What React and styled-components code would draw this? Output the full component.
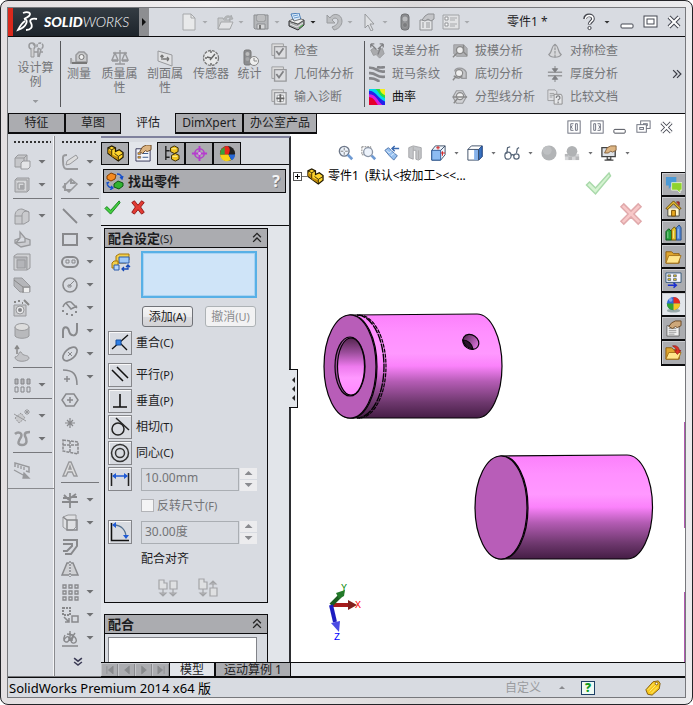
import React from 'react';
import styled, { createGlobalStyle } from 'styled-components';

const c = {
  chrome: '#d8dbe1',
  panel: '#e2e5ea',
  mid: '#abacb0',
  ink: '#1c1c1e',
  muted: '#737477',
  icon: '#98999c',
  line: '#0c0c0e',
};

const GlobalStyle = createGlobalStyle`
  * { box-sizing: border-box; }
  body { margin: 0; background: #fff; }
  body, button, input, textarea {
    font-family: "Noto Sans", "Noto Sans CJK SC", sans-serif;
    font-size: 12px;
    line-height: 14px;
    color: ${c.ink};
  }
  button { border: 0; padding: 0; background: none; cursor: default; }
`;

/* ---------- icons ---------- */

const g = c.icon;
const ICONS = {
  newDoc: <><path d="M3 1h8l4 4v12H3z" fill="#e8e9ea" stroke="#a6a8aa" /><path d="M11 1v4h4" fill="none" stroke="#a6a8aa" /></>,
  open: <><path d="M2 5h5l1 2h6v9H2z" fill="#c9cbcd" stroke="#a6a8aa" /><path d="M2 16l3-7h12l-3 7z" fill="#e2e3e5" stroke="#a6a8aa" /><path d="M8 6c1-4 5-4 7-2V2l2 4-4 1 1-2c-2-1-4 0-4 2" fill="#b4b6b8" stroke="#a0a2a4" strokeWidth=".6" /></>,
  save: <><path d="M2 2h14v14H3l-1-1z" fill="#b4b6b9" stroke="#8d8f92" /><path d="M5 2h8v6H5z" fill="#ededee" stroke="#8d8f92" /><path d="M6 4h6M6 6h6" stroke="#8d8f92" /><path d="M5 11h8v5H5z" fill="#d6d7d9" stroke="#8d8f92" /><path d="M7 12h2v4H7z" fill="#777" /></>,
  print: <><path d="M3 1l8-1 2 7-7 2z" fill="#dcebfa" stroke="#4b7fb9" /><path d="M5 3l5-1M6 5l5-1" stroke="#6b9dd0" /><path d="M1 8l9 3 6-4v5l-6 5-9-4z" fill="#a5a7a9" stroke="#2e2e30" /><path d="M1 8l4-2 1 2 7-2 3 1-6 4z" fill="#eee" stroke="#444" strokeWidth=".7" /><path d="M2 11l7 3 6-4" stroke="#e8e8e8" fill="none" /><path d="M11 15l4-3" stroke="#3fb23f" /></>,
  undo: <path d="M2 2v8h8L7 7c2-3 6-2 6 1s-3 5-6 6l2 3c5-1 8-5 8-9 0-7-9-9-12-3z" fill="#bdbfc2" stroke="#999b9e" />,
  cursor: <path d="M5 1v14l3-3 3 6 2-1-3-6h4z" fill="#dfe1e4" stroke="#97999c" />,
  traffic: <><rect x="5" y="1" width="8" height="16" rx="3" fill="#8b8c8f" stroke="#717274" /><circle cx="9" cy="6" r="2.5" fill="#b9babc" /><circle cx="9" cy="12" r="2.5" fill="#7b7c7f" stroke="#aaa" strokeWidth=".5" /></>,
  props: <><path d="M2 7h12v10H2z" fill="#e4e5e7" stroke="#8e9093" /><path d="M4 10h2M8 10h4M4 12h2M8 12h4M4 14h2M8 14h4" stroke="#97999c" /><path d="M4 7l3-4 3-2h6v5l-3 2-3-2-3 2z" fill="#c4c5c8" stroke="#8e9093" /></>,
  options: <><path d="M1 2h16v14H1z" fill="#e1e2e4" stroke="#a0a2a5" /><path d="M3 4h3v3H3zM3 10h3v3H3z" fill="#fff" stroke="#919396" /><path d="M8 5h7M8 7h5M8 11h7M8 13h5" stroke="#a7a9ac" /></>,
  help: <><path d="M5 6c0-5 8-5 8 0 0 2-3.500 3-3.500 5.500" fill="none" stroke="#43454d" strokeWidth="3.600" /><path d="M5.500 6c0-4.500 7.500-4.500 7.500 0 0 2-3.500 3-3.500 5" fill="none" stroke="#fff" strokeWidth="1.600" /><circle cx="9.500" cy="15" r="1.600" fill="#fff" stroke="#43454d" /></>,
  winMin: <rect x="2" y="11" width="12" height="4" rx="1" fill="#fff" stroke="#454852" />,
  winMax: <><rect x="2" y="3" width="13" height="11" fill="#fff" stroke="#454852" /><rect x="5" y="6" width="7" height="5" fill="#fff" stroke="#454852" /></>,
  winClose: <><path d="M4 4l10 10M14 4L4 14" stroke="#454852" strokeWidth="4" /><path d="M4 4l10 10M14 4L4 14" stroke="#fff" strokeWidth="2" /></>,
  winRestore: <><rect x="6" y="2" width="10" height="8" fill="#fff" stroke="#6c707d" /><rect x="9" y="5" width="4" height="2" fill="none" stroke="#6c707d" /><rect x="2" y="6" width="10" height="8" fill="#fff" stroke="#6c707d" /><rect x="5" y="9" width="4" height="2" fill="none" stroke="#6c707d" /></>,
  paneL: <><rect x="2" y="2" width="13" height="13" fill="#fff" stroke="#6c707d" /><path d="M8 5H5v7h3M7 7L5 8.500l2 1.500M10 5h2v7h-2z" fill="none" stroke="#6c707d" /></>,
  paneR: <><rect x="2" y="2" width="13" height="13" fill="#fff" stroke="#6c707d" /><path d="M9 5h3v7H9M10 7l2 1.500-2 1.500M5 5h2v7H5z" fill="none" stroke="#6c707d" /></>,
  study: <><circle cx="5" cy="5" r="3" fill="none" stroke={g} strokeWidth="1.500" /><path d="M4 7v9h3V7" fill="#d0d0d2" stroke={g} /><circle cx="13" cy="5" r="3" fill="none" stroke={g} strokeWidth="1.500" strokeDasharray="3 1" /><path d="M11 8v8M14 8l-2 8M7 11h4M13 11h3M6 3l2 2" stroke={g} strokeWidth="1.500" /></>,
  measure: <><path d="M6 13V6l3-3h5l3 3v7zM1 9v5h6" fill="#c9cacc" stroke={g} strokeWidth="1.500" /><circle cx="11.500" cy="8" r="2.500" fill="#eee" stroke="#777" /><path d="M2 14h15" stroke="#777" strokeWidth="2" /></>,
  mass: <path d="M9 1v14M2 4h14M4 15h10M4 4l-3 7h6zM14 4l-3 7h6zM1 12h6M11 12h6" fill="none" stroke={g} strokeWidth="1.400" />,
  section: <><path d="M2 2l14 4v11L2 12z" fill="#e0e1e3" stroke={g} /><path d="M6 6v5M6 6L4.500 8M6 6l1.500 2M7 10h6M13 10l-2-2M13 10l-2 2" fill="none" stroke="#777" strokeWidth="1.300" /></>,
  sensor: <><circle cx="9" cy="9" r="7.500" fill="#e7e8e9" stroke="#777" strokeWidth="1.300" strokeDasharray="3 1" /><path d="M8 11l5-6M9 9L5 8M9 2v2M3 9h2M13 9h2M9 14v2" stroke="#666" strokeWidth="1.400" /></>,
  stats: <><rect x="3" y="1" width="7" height="15" rx="2" fill="#8c8d90" stroke="#777" /><circle cx="6.500" cy="5" r="2" fill="#bbb" /><circle cx="6.500" cy="10" r="2" fill="#a5a6a8" /><circle cx="13" cy="12" r="4.500" fill="#eee" stroke="#888" /><path d="M13 9v3h3" fill="none" stroke="#888" /></>,
  check: <><path d="M1 1h13v13H1z" fill="#ddd" stroke={g} /><path d="M4 4h13v13H4z" fill="#dcdde0" stroke={g} strokeWidth="1.500" /><path d="M6 9l3 4 5-7" fill="none" stroke="#808184" strokeWidth="2" /></>,
  import: <><path d="M1 1h13v13H1z" fill="#ddd" stroke={g} /><path d="M4 4h13v13H4z" fill="#e8e9eb" stroke={g} strokeWidth="1.500" /><path d="M7 7h7v7H7z" fill="#fff" stroke={g} /><path d="M10.500 6v9M6 10.500h9" stroke="#666" strokeWidth="2" /></>,
  deviation: <><path d="M2 8l4-3 4 4 5-3 2 6-5 5-4-4-3 1z" fill="#a9aaad" stroke={g} /><path d="M2 1l6 6M16 1l-6 6M2 1v4M2 1h4M16 1h-4M16 1v4M13 5l-3 8" fill="none" stroke="#808184" strokeWidth="1.500" /></>,
  zebra: <path d="M0 2c9-1 8 6 18 4M0 8c9-1 8 6 18 4M0 14c8-1 8 3 12 3M9 1c3 1 5 1 9 0" fill="none" stroke="#85868a" strokeWidth="3" />,
  curvature: <><path d="M0 0h18v18H0z" fill="#f3ee1c" /><path d="M0 0h12c1 4 3 6 6 7v11H0z" fill="#28dd3c" /><path d="M0 0h7c4 2 4 8 11 10v8H0z" fill="#00d5ee" /><path d="M0 2c8 0 9 8 18 12v4H0z" fill="#2222ea" /><path d="M0 6c8 0 9 7 15 12H0z" fill="#d81ce0" /><path d="M0 9c6 1 7 5 10 9H0z" fill="#e5002c" /></>,
  draft: <><path d="M2 2h11l4 4v9H5l-3-3z" fill="#b0b1b4" stroke={g} /><circle cx="9" cy="8" r="4" fill="#eee" stroke="#888" strokeWidth="1.500" /><path d="M6 11l-5 5M13 2v8l4 4" fill="none" stroke="#888" strokeWidth="1.500" /></>,
  undercut: <><path d="M3 6c1-5 10-5 13 1v7h-5v-4" fill="#c4c5c8" stroke={g} strokeWidth="1.500" /><circle cx="8" cy="8" r="4" fill="#eee" stroke="#888" strokeWidth="1.300" /><path d="M5 11l-4 5M2 11c4 4 8 3 9 0" fill="none" stroke="#888" strokeWidth="1.500" /></>,
  parting: <><path d="M5 2h7l4 7-4 7H5L1 9z" fill="#d1d2d5" stroke={g} strokeWidth="1.300" /><circle cx="9" cy="8" r="4" fill="#eee" stroke="#888" strokeWidth="1.300" /><path d="M6 11l-4 5M1 9h16" fill="none" stroke="#888" strokeWidth="1.500" /></>,
  symmetry: <><path d="M9 2c4 0 3 9 7 11-2 4-12 4-14 0 4-2 3-11 7-11z" fill="#d6d7da" stroke={g} strokeWidth="1.300" /><path d="M9 1v16" stroke="#808184" strokeDasharray="3 1" /></>,
  thickness: <><path d="M1 7h16M1 11h16" stroke={g} strokeWidth="1.500" /><path d="M9 0v5M6 3l3 4 3-4zM9 18v-4M6 15l3-4 3 4z" fill="#808184" stroke="#808184" /></>,
  compare: <><path d="M1 1h8l2 2v10H1z" fill="#dedfe2" stroke={g} /><path d="M3 5h5M3 7h5M3 9h3" stroke={g} /><path d="M8 6h8l1 2v9H8z" fill="#e6e7e9" stroke="#888" /><path d="M10.500 10c0-3 4-3 4 0 0 2-2 1-2 3M12.500 14v2" fill="none" stroke="#808184" strokeWidth="1.400" /></>,
  boss: <><path d="M2 5l3-3h9v9l-3 3H2z" fill="#c6c7ca" stroke={g} /><path d="M2 5h9v9M11 5l3-3" fill="none" stroke={g} /><path d="M8 10l2-2h7v6l-2 2H8z" fill="#e4e5e7" stroke={g} /></>,
  cut: <><path d="M2 4l2-2h12v12l-2 2H2z" fill="#c6c7ca" stroke={g} /><path d="M2 4h12v12M5 7h6v6H5z" fill="#d7d8da" stroke={g} /><path d="M7 9h4v4H7z" fill="#a5a6a9" /></>,
  fillet: <><path d="M2 9c0-5 3-7 7-7l7 3v9l-5 3H2z" fill="#c9cacd" stroke={g} /><path d="M2 9h7c0-4 3-6 7-4M9 9v8" fill="none" stroke={g} /></>,
  rib: <path d="M2 10l5-2V2l5 6 5 2v5l-9 2-6-4zM7 8l-4 5 9-1V8" fill="#cbccd0" stroke={g} strokeWidth="1.300" />,
  shell: <><path d="M1 3l3-2h13v14l-3 2H1z" fill="#cfd0d3" stroke={g} /><path d="M1 4h13v13M4 7h8v8H4z" fill="#b4b5b9" stroke={g} /></>,
  draftCut: <><path d="M1 2h8l8 8v6H7L1 10z" fill="#b5b6ba" stroke={g} /><path d="M1 4l9 7v6M10 11h7" fill="none" stroke="#888" /><path d="M11 12h5v4h-5z" fill="#eee" /></>,
  hole: <><path d="M1 6h12v11H1z" fill="#c9cacd" stroke={g} /><circle cx="7" cy="11" r="4" fill="#e7e7e9" stroke={g} /><circle cx="7" cy="11" r="2" fill="#85868a" /><path d="M11 1l5 5M1 3h2M5 2h2M9 4h1" stroke="#888" strokeWidth="2" /></>,
  revolve: <><path d="M2 5v9c2 3 12 3 14 0V5" fill="#b8b9bc" stroke={g} /><ellipse cx="9" cy="5" rx="7" ry="3.500" fill="#ddd" stroke={g} /></>,
  dome: <><path d="M2 12c5-1 3-6 6-5 2 5 7 2 8 6 0 4-14 5-14-1z" fill="#c3c4c8" stroke={g} /><path d="M4 9V2M2 4l2-3 2 3" fill="none" stroke="#888" strokeWidth="1.500" /></>,
  pattern: <><path d="M2 3h3v5H2zM8 3h3v5H8zM14 3h3v5h-3z" fill="#b1b2b6" stroke="#85868a" /><path d="M2 11h3v5H2zM8 11h3v5H8zM14 11h3v5h-3z" fill="none" stroke="#85868a" /></>,
  refGeo: <><path d="M2 11l6-5 4 5-6 5z" fill="#c8c9cc" stroke={g} strokeDasharray="2 1" /><path d="M1 7l12 7M14 2v6M11 5h6M12 3l4 4M16 3l-4 4" stroke={g} /></>,
  curves: <path d="M2 4c3-3 8-1 6 3-2 3-5 8 1 8s5-6 3-9c-1-4 3-4 5-4" fill="none" stroke={g} strokeWidth="2.500" />,
  instant: <><path d="M2 6V2l14 4v5l-3-1" fill="none" stroke={g} strokeWidth="1.500" /><path d="M5 4v3M8 5v3M11 6v3M1 9l11 6M11 12l5 5h-6z" stroke={g} fill={g} strokeWidth="1.300" /></>,
  sketch: <><path d="M6 2c-5 0-4 2-4 6 0 6 1 8 4 8h11" fill="none" stroke={g} strokeWidth="2" /><path d="M5 12l1-4 9-6 2 3-8 6z" fill="#ddd" stroke={g} /></>,
  smartDim: <><path d="M2 11l8-8 6 5-8 8z" fill="none" stroke={g} strokeWidth="1.500" /><path d="M4 7v7h6M10 3v4h4" fill="none" stroke={g} strokeWidth="2" /></>,
  sLine: <path d="M2 2l14 14" stroke="#88898c" strokeWidth="1.800" />,
  sRect: <path d="M2 4h14v11H2z" fill="none" stroke="#88898c" strokeWidth="2" />,
  slot: <><rect x="1" y="4" width="16" height="10" rx="5" fill="none" stroke="#88898c" strokeWidth="2" /><path d="M5 7h3v3H5zM11 7h3v3h-3z" fill="none" stroke="#88898c" /></>,
  sCircle: <><circle cx="9" cy="9" r="7" fill="none" stroke="#88898c" strokeWidth="1.600" /><path d="M8 10l5-5M7 9h3v2H7z" fill="none" stroke="#88898c" /></>,
  arc: <><path d="M2 8c2-6 8-6 9-4l5 5M5 4l5 6 6-3" fill="none" stroke="#88898c" strokeWidth="1.500" /><path d="M2 11v2M5 15h2M10 16h2M15 12v2" stroke="#88898c" strokeWidth="2" /></>,
  spline: <path d="M2 16V9c0-5 5-5 6 0s8 7 8-1V1" fill="none" stroke="#88898c" strokeWidth="2" />,
  ellipse: <><ellipse cx="9" cy="9" rx="8.500" ry="5" transform="rotate(-42 9 9)" fill="none" stroke="#88898c" strokeWidth="1.700" /><path d="M7 7l4 4M11 7l-4 4" stroke="#88898c" /></>,
  sFillet: <path d="M2 2c10 0 14 4 14 15M6 8v6M3 11h6" fill="none" stroke="#88898c" strokeWidth="1.500" />,
  polygon: <path d="M5 3h8l4 6-4 6H5L1 9zM9 6v6M6 9h6" fill="none" stroke="#88898c" strokeWidth="1.500" />,
  point: <path d="M9 4v10M4 9h10M6 6l6 6M12 6l-6 6" stroke="#88898c" strokeWidth="1.200" />,
  plane: <path d="M2 3l15 2v12L2 14zM2 8h15M9 4v12" fill="none" stroke="#88898c" strokeWidth="1.500" strokeDasharray="3 1" />,
  letter: <path d="M2 16L8 2h2l6 14h-3l-2-4H7l-2 4zM8 9h2L9 6z" fill="#ddd" stroke={g} strokeWidth="1.400" />,
  trim: <path d="M9 2v15M1 11h16M3 4l5 5M15 3L8 8M2 7h6M11 6h5" fill="none" stroke="#88898c" strokeWidth="1.800" />,
  convert: <><path d="M2 3l5-2h8v12l-3 3H6l-4-3z" fill="#dfe0e3" stroke={g} /><path d="M2 3l4 3h10v10H6V6" fill="none" stroke="#88898c" strokeWidth="1.500" /></>,
  offset: <path d="M2 3h14v6l-6 8H4M2 7h9v2l-5 5H2" fill="none" stroke="#88898c" strokeWidth="2" />,
  mirror: <><path d="M8 3H6L1 15h7M10 3h2l5 12h-7" fill="#cfd0d3" stroke="#88898c" strokeWidth="1.500" /><path d="M9 1v16" stroke="#88898c" strokeDasharray="2 1" strokeWidth="1.500" /></>,
  grid: <path d="M2 2h3v3H2zM8 2h3v3H8zM14 2h3v3h-3zM2 8h3v3H2zM8 8h3v3H8zM14 8h3v3h-3zM2 14h3v3H2zM8 14h3v3H8zM14 14h3v3h-3z" fill="none" stroke="#88898c" strokeWidth="1.300" />,
  move: <><path d="M2 2h7v7H2z" fill="none" stroke="#88898c" strokeWidth="2" strokeDasharray="2 1" /><path d="M11 10h6v6h-6zM3 11l5 5M8 12v4H4" fill="none" stroke="#88898c" strokeWidth="1.500" /></>,
  relations: <path d="M1 17h16M9 2v10M4 6c-4 8 4 9 4 4S3 9 3 12M14 4l-4 6c-1 6 7 5 5 0s-4-1-4 2M6 5l6 1" fill="none" stroke="#88898c" strokeWidth="1.400" />,
  part: <><path d="M1 3l4-2 4 2v4l4-2 4 3v5l-5 4L1 9z" fill="#ffd52e" stroke="#241b03" strokeWidth="1.300" /><path d="M1 5l4 2v4L1 8zM5 10l7 3v3l-7-4z" fill="#c18a0a" /><path d="M1 3l4 2 4-2M5 5v6M8 9l4 3 5-3M12 12v4" fill="none" stroke="#241b03" strokeWidth=".9" /></>,
  propTab: <><path d="M1 4h15v13H1z" fill="#f3f5fa" stroke="#335" /><path d="M3 8h3v2H3zM3 12h3v2H3z" fill="#e8a325" stroke="#335" strokeWidth=".5" /><path d="M8 9h6M8 13h6" stroke="#358" /><path d="M5 7l3-5 4-2h5v5l-4 2-2-1-3 3z" fill="#dcb482" stroke="#6b4824" /></>,
  config: <><path d="M3 1v15M3 6h4M3 13h4" stroke="#222" fill="none" strokeWidth="1.500" /><path d="M8 3l4-2 4 2v4l-4 2-4-2zM9 11l4-2 4 2v4l-4 2-4-2z" fill="#f0c322" stroke="#352703" /><path d="M9 4h5M10 12h5" stroke="#fff4a5" /></>,
  target: <><circle cx="9" cy="9" r="5" fill="none" stroke="#b53dcd" strokeWidth="1.600" /><path d="M9 1v16M1 9h16" stroke="#b53dcd" strokeWidth="2" /><circle cx="9" cy="9" r="1.500" fill="#e9a2f5" /></>,
  ballDark: <><circle cx="9" cy="9" r="8" fill="#222" /><path d="M9 1c3 2 3 5 1 9H1c0-5 3-9 8-9z" fill="#e6271b" /><path d="M1 10h9l3 6c-6 3-11 0-12-6z" fill="#f7d116" /><path d="M2 5l4-3v8H1z" fill="#37a339" /><path d="M10 10h7c0 3-2 6-4 6z" fill="#2566d6" /></>,
  ball: <><ellipse cx="9" cy="15.500" rx="7" ry="2" fill="#9aa" /><circle cx="9" cy="8" r="7" fill="#2d68da" /><path d="M9 8V1c4 0 7 3 7 7z" fill="#e32b21" /><path d="M9 8v7c-4 0-7-3-7-7z" fill="#35a42f" /><path d="M9 8h7c0 4-3 7-7 7z" fill="#f4c823" /><circle cx="6" cy="4" r="2" fill="#fff" opacity=".4" /></>,
  find: <><path d="M1 4l4-3 5 2-1 4-4 2-4-2z" fill="#f58a1f" stroke="#833d00" /><path d="M8 12l4-3 5 2v3l-4 3-5-2z" fill="#30b330" stroke="#0b5710" /><path d="M11 2c4 0 5 2 5 5M14 5l2 2 1-3M1 10c0 4 2 6 6 6M5 14l2 2-3 2M1 12l2-2" fill="none" stroke="#164fc9" strokeWidth="1.300" /></>,
  ok: <path d="M1 10l2-2 4 4L16 2l1 2L7 16z" fill="#45cf3f" stroke="#14821c" />,
  cancel: <path d="M2 4l3-2 4 5 4-5 3 2-4 5 4 6-3 2-4-5-4 5-3-2 4-6z" fill="#e23b33" stroke="#8d1110" />,
  okLight: <path d="M1 10l2-2 4 4L16 2l1 2L7 16z" fill="#d5f3d1" stroke="#a9d9aa" />,
  cancelLight: <path d="M2 4l2-2 5 5 5-5 2 2-5 5 5 5-2 2-5-5-5 5-2-2 5-5z" fill="#f7c8c8" stroke="#e0a9ab" />,
  selSet: <><path d="M5 3l3-2h10v6l-3 3H5z" fill="#f2d04c" stroke="#a77708" /><path d="M8 4h10v6H8z" fill="#9fc8f7" stroke="#2c5daa" /><path d="M1 10l2-2h4v7H1z" fill="#f2d04c" stroke="#a77708" /><path d="M3 12h5v5H3z" fill="#b6d5fa" stroke="#2c5daa" /><path d="M17 12v4h-6M15 14l2-2 2 2M13 14l-2 2 2 2" fill="none" stroke="#1649b8" strokeWidth="1.300" /></>,
  coincident: <><path d="M2 16L18 2M9 9l8 8" stroke="#111" strokeWidth="1.300" /><path d="M6 7h5v5H6z" fill="#2d7ee6" stroke="#144f9f" /></>,
  parallel: <path d="M2 5l11 11M7 2l11 11" stroke="#111" strokeWidth="1.500" />,
  perpendicular: <path d="M10 3v13M3 16h14" stroke="#111" strokeWidth="1.600" />,
  tangent: <><circle cx="8" cy="12" r="6" fill="none" stroke="#222" strokeWidth="1.500" /><path d="M6 1l13 12" stroke="#222" strokeWidth="1.500" /></>,
  concentric: <><circle cx="10" cy="10" r="8.500" fill="none" stroke="#333" strokeWidth="1.500" /><circle cx="10" cy="10" r="4.500" fill="none" stroke="#333" strokeWidth="1.500" /></>,
  distance: <><path d="M1.500 4v13M18.500 4v13" stroke="#222" strokeWidth="1.500" /><path d="M3 7h14" stroke="#205bd5" strokeWidth="1.500" /><path d="M2 7l4-3v6zM18 7l-4-3v6z" fill="#205bd5" /></>,
  angle: <><path d="M1.500 1v17.500H19" fill="none" stroke="#111" strokeWidth="1.500" /><path d="M4 3c7 0 12 5 12 12" fill="none" stroke="#54718f" strokeWidth="1.300" /><path d="M2 3l4-3v6zM16 17l-3-4h6z" fill="#205bd5" /></>,
  aligned: <path d="M1 2h5v3h3v6H1zM12 3h7v8h-7zM5 11v6M2 15l3 3 3-3zM15 11v6M12 15l3 3 3-3z" fill="#dfe0e2" stroke="#a3a4a7" strokeWidth="1.200" />,
  antiAligned: <path d="M1 1h5v3h3v7H1zM12 10h7v8h-7zM5 11v6M2 15l3 3 3-3zM15 10V4M12 6l3-3 3 3z" fill="#dfe0e2" stroke="#a3a4a7" strokeWidth="1.200" />,
  zoomFit: <><circle cx="7" cy="7" r="5.500" fill="#edf3fb" stroke="#6d7788" strokeWidth="1.500" /><path d="M7 3v8M3 7h8" stroke="#777" strokeDasharray="3 2" /><path d="M11 11l5 5" stroke="#6f9ad2" strokeWidth="3" /></>,
  zoomArea: <><path d="M1 2h10v9H1z" fill="none" stroke="#777" strokeDasharray="2 1" /><circle cx="8" cy="8" r="5" fill="#edf3fb" stroke="#8b95a5" strokeWidth="1.500" /><path d="M12 12l4 4" stroke="#6f9ad2" strokeWidth="3" /></>,
  prevView: <><path d="M1 6l4-3 5 5 5 4-4 5-5-5z" fill="#98c1ef" stroke="#476ea5" /><path d="M3 6l3 3 3-3M8 12l4-3" fill="none" stroke="#e6f2ff" /><path d="M10 4h7M12 1L9 4l3 3" fill="none" stroke="#3a69af" strokeWidth="1.600" /></>,
  sectionView: <><path d="M2 3l5-2 9 2v12l-3 2-3-1V6H7v10l-5-2z" fill="#c3c5c8" stroke="#a1a3a6" /><path d="M7 6V2M13 6v10" stroke="#aaa" /></>,
  viewOrient: <><path d="M2 6l4-5h11v10l-5 6H2z" fill="#f0f6fd" stroke="#33455f" /><path d="M2 6h10v11H2z" fill="#8dbcf2" stroke="#245596" /><path d="M12 6l5-5" stroke="#33455f" /><path d="M9 1v4M7 3h4M14 7v5M12 9h5" stroke="#d52c2c" strokeWidth="1.200" /></>,
  display: <><path d="M1 5l4-4h12v12l-4 4H1z" fill="#fff" stroke="#33455f" /><path d="M13 5l4-4v12l-4 4z" fill="#3772c2" stroke="#1f4484" /><path d="M8 5h5v12H8z" fill="#86b2ea" /><path d="M1 5h12v12" fill="none" stroke="#33455f" /></>,
  glasses: <path d="M3 10l1-7 3-1M14 9l1-5 2-1M8 12c1-2 2-1 3 0M1 12a3.500 4 0 1 0 7 0a3.500 4 0 1 0-7 0M11 13a3 3 0 1 0 6 0a3 3 0 1 0-6 0" fill="none" stroke="#566578" strokeWidth="1.400" />,
  sphere: <><circle cx="9" cy="9" r="8.500" fill="#b2b4b6" /><circle cx="7" cy="6" r="5" fill="#bec0c2" /></>,
  scene: <><path d="M1 10h16v7H1z" fill="#d5d6d8" /><path d="M1 10h4v3H1zM9 10h4v3H9zM5 13h4v4H5zM13 13h4v4h-4z" fill="#b7b8ba" /><circle cx="9" cy="7" r="6" fill="#b0b2b4" /></>,
  viewSettings: <><path d="M1 3h15v10H1z" fill="#dfe3e8" stroke="#444" strokeWidth="1.500" /><path d="M7 13v3h4v-3M4 17h10" stroke="#444" fill="none" strokeWidth="1.300" /><path d="M4 9l3-6 4-2h6v5l-4 2-2-1-3 2z" fill="#dcb482" stroke="#805d38" /></>,
  chat: <><path d="M1 1h11v9H7l-3 4v-4H1z" fill="#4b9ad6" /><path d="M7 7h11v8h-2v3l-3-3H7z" fill="#8fd32d" stroke="#fff" strokeWidth=".7" /></>,
  home: <><path d="M3 9v8h12V9" fill="#fff6cc" stroke="#444" /><path d="M1 9l8-8 8 8-2 1-6-6-6 6z" fill="#e7bd34" stroke="#674600" /><path d="M12 2h3v4" fill="#c32" stroke="#722" /><path d="M7 11h4v6H7z" fill="#e8a820" stroke="#744b00" /></>,
  library: <><path d="M1 8l3-3 3 3v9H1z" fill="#25a23b" stroke="#0b521a" /><path d="M7 6l3-3 2 3v11H7z" fill="#e6c329" stroke="#675400" /><path d="M12 4l3-3 2 3v13h-5z" fill="#578ede" stroke="#264a82" /><path d="M3 8v7M9 7v8M14 5v10" stroke="#fff" opacity=".5" /></>,
  folder: <><path d="M1 4h6l2 2h6v10H1z" fill="#e0a62e" stroke="#8b5b0c" /><path d="M1 16l3-8h13l-3 8z" fill="#ffe58b" stroke="#a6741b" /></>,
  palette: <><path d="M1 1h16v10H1z" fill="#f6f6ff" stroke="#357" /><path d="M3 3h3v2H3zM9 3h3v2H9zM3 7h3v2H3zM9 7h3v2H9z" fill="#edbf21" stroke="#246" strokeWidth=".6" /><path d="M3 14h8M9 11.500l3 2.500-3 2.500" fill="none" stroke="#1b2fd0" strokeWidth="1.500" /></>,
  custom: <><path d="M2 6h13v11H2z" fill="#f0f0f0" stroke="#666" /><path d="M4 9h8M4 11h8M4 13h8M4 15h6" stroke="#999" /><path d="M4 7l3-4 4-2h6v5l-4 2-2-1-3 2z" fill="#cda77a" stroke="#6b4824" /></>,
  folderOut: <><path d="M1 4h6l2 2h6v10H1z" fill="#e0a62e" stroke="#8b5b0c" /><path d="M1 16l3-7h13l-3 7z" fill="#ffe58b" stroke="#a6741b" /><path d="M8 2c5-1 7 2 7 5h2l-4 4-3-4h2c0-2-1-3-4-5z" fill="#de3127" stroke="#8b1712" strokeWidth=".7" /></>,
  tag: <><path d="M1 11l8-9 6-1 2 3-1 6-8 7-5-1z" fill="#f8c91d" stroke="#7c5306" /><path d="M3 11l7-7M5 13l7-7M7 15l7-7" stroke="#ffed85" /><circle cx="13" cy="4" r="1.500" fill="#fff" stroke="#7c5306" /></>,
  up: <path d="M4 8l5-5 5 5M4 14l5-5 5 5" fill="none" stroke="#222" strokeWidth="1.700" />,
  down: <path d="M4 4l5 4 5-4M4 9l5 4 5-4" fill="none" stroke="#3b3b55" strokeWidth="2" />,
  more: <path d="M4 4l5 5-5 5M9 4l5 5-5 5" fill="none" stroke="#3b3d46" strokeWidth="1.600" />,
  first: <path d="M5 4v10M13 4L7 9l6 5z" fill="#888a8d" stroke="#888a8d" />,
  prev: <path d="M12 4L6 9l6 5z" fill="#888a8d" stroke="#888a8d" />,
  next: <path d="M6 4l6 5-6 5z" fill="#888a8d" stroke="#888a8d" />,
  last: <path d="M5 4l6 5-6 5zM13 4v10" fill="#888a8d" stroke="#888a8d" />,
};
const LARGE_ICONS = ['selSet', 'coincident', 'parallel', 'perpendicular', 'tangent', 'concentric', 'distance', 'angle', 'aligned', 'antiAligned'];

const Svg = styled.svg`
  display: block;
  flex: none;
  width: ${p => p.$size}px;
  height: ${p => p.$size}px;
`;
const Icon = ({ name, size = 18 }) => {
  const box = LARGE_ICONS.includes(name) ? 20 : 18;
  return <Svg $size={size} viewBox={`0 0 ${box} ${box}`} aria-hidden="true">{ICONS[name]}</Svg>;
};

const Caret = styled.span`
  display: block;
  flex: none;
  width: 8px;
  height: 4px;
  background: ${p => p.$color || '#6f7073'};
  clip-path: ${p => (p.$up ? 'polygon(0 100%, 100% 100%, 50% 0)' : 'polygon(0 0, 100% 0, 50% 100%)')};
`;

/* ---------- window and title bar ---------- */

const Window = styled.div`
  min-height: 100vh;
  display: flex;
  padding: 7px;
  border: 1px solid #242428;
  border-radius: 8px;
  background: linear-gradient(90deg, #e3dfe1, #f1eff0 30%, #dcdadb 60%, #ececee);
`;
const Frame = styled.div`
  flex: 1;
  min-width: 0;
  display: flex;
  flex-direction: column;
  background: ${c.chrome};
  box-shadow: 0 0 0 1px #77787c;
`;
const TitleBar = styled.header`
  display: flex;
  align-items: center;
  height: 29px;
  padding-right: 2px;
  border-bottom: 1px solid ${c.line};
`;
const Brand = styled.div`
  display: flex;
  align-items: center;
  align-self: stretch;
  width: 131px;
  padding-left: 3px;
  gap: 6px;
  border-left: 5px solid #da291c;
  background: linear-gradient(#343c43, #1d242b);
  color: #fff;
  font: italic 300 14px/18px Lato, sans-serif;
  b { font-weight: 900; }
`;
const BrandMark = styled.svg`
  width: 22px;
  height: 22px;
`;
const BrandToggle = styled.button`
  align-self: stretch;
  width: 10px;
  background: #8d8e91;
  display: grid;
  place-items: center;
  &::after {
    content: '';
    border: 4px solid transparent;
    border-left-color: #111;
    border-right: 0;
  }
`;
const QuickTools = styled.div`
  display: flex;
  align-items: center;
  flex: 1;
  padding-left: 31px;
`;
const QuickButton = styled.button`
  display: flex;
  align-items: center;
  gap: 4px;
  width: ${p => p.$w}px;
  ${Caret} { width: 6px; height: 3px; }
`;
const DocTitle = styled.h1`
  margin: 0;
  width: 73px;
  font-size: 12px;
  font-weight: 400;
`;
const WindowButtons = styled.div`
  display: flex;
  align-items: center;
  gap: 5px;
`;
const PlainButton = styled.button`
  display: flex;
  align-items: center;
  gap: 6px;
`;
const HelpMenu = styled(PlainButton)`
  margin-right: 4px;
  ${Caret} { width: 6px; height: 3px; }
`;

const QUICK = [
  ['newDoc', '新建', 36, 1], ['open', '打开', 36, 1], ['save', '保存', 36, 1], ['print', '打印', 37, 2],
  ['undo', '撤消', 35, 1], ['cursor', '选择', 36, 1], ['traffic', '重建模型', 22], ['props', '文件属性', 24], ['options', '选项', 36, 1],
];

/* ---------- ribbon ---------- */

const Ribbon = styled.div`
  display: flex;
  height: 77px;
  padding: 4px 1px 6px 3px;
  border-bottom: 1px solid ${c.line};
`;
const Rule = styled.span`
  width: 1px;
  background: #56575a;
`;
const BigButton = styled.button`
  display: flex;
  flex-direction: column;
  align-items: center;
  width: ${p => p.$w}px;
  padding: ${p => (p.$tall ? 0 : 8)}px 3px 0;
  color: ${c.muted};
  gap: ${p => (p.$tall ? 2 : 0)}px;
  ${Caret} { width: 6px; height: 3px; margin-top: 9px; }
`;
const Commands = styled.div`
  display: grid;
  grid-template-rows: repeat(3, 23px);
  width: ${p => p.$w}px;
  padding-left: ${p => p.$pad}px;
  margin-top: -2px;
`;
const Command = styled.button`
  display: flex;
  align-items: center;
  gap: 7px;
  white-space: nowrap;
  color: ${p => (p.$active ? '#111' : c.muted)};
`;
const MoreButton = styled.button`
  margin-left: auto;
  align-self: center;
`;

const BIG = [['measure', '测量', 36], ['mass', '质量属性', 45], ['section', '剖面属性', 46], ['sensor', '传感器', 46], ['stats', '统计', 31]];
const COMMANDS = [
  [99, 6, [['check', '检查'], ['check', '几何体分析'], ['import', '输入诊断']]],
  [83, 4, [['deviation', '误差分析'], ['zebra', '斑马条纹'], ['curvature', '曲率']]],
  [95, 4, [['draft', '拔模分析'], ['undercut', '底切分析'], ['parting', '分型线分析']]],
  [90, 4, [['symmetry', '对称检查'], ['thickness', '厚度分析'], ['compare', '比较文档']]],
];

const TabRow = styled.div`
  display: flex;
  height: 22px;
  background: linear-gradient(${c.chrome}, ${c.chrome}) left / 282px 100% no-repeat, #fff;
`;
const RibbonTab = styled.button`
  width: ${p => p.$w}px;
  height: 20px;
  margin-top: ${p => (p.$on ? -1 : 0)}px;
  border: 1px solid ${c.line};
  border-width: ${p => (p.$on ? 0 : '0 1px 2px 1px')};
  background: ${p => (p.$on ? c.chrome : c.mid)};
  white-space: nowrap;
`;
const DocButtons = styled.div`
  display: flex;
  align-items: flex-end;
  gap: 6px;
  margin-left: auto;
  padding-right: 10px;
`;

/* ---------- tool strips ---------- */

const Work = styled.div`
  flex: 1;
  display: flex;
  min-height: 0;
`;
const Rail = styled.nav`
  width: ${p => p.$w}px;
  border-right: ${p => (p.$edge ? '1px solid #898a8e' : 0)};
  border-bottom: 1px solid #77787c;
  box-shadow: ${p => (p.$edge ? 'inset -1px 0 #f4f5f7' : 'none')};
`;
const Strip = styled.div`
  padding: 5px 2px 7px ${p => (p.$end ? 5 : 6)}px;
  border-bottom: ${p => (p.$end ? '1px solid #898a8e' : 0)};
  &::before {
    content: '';
    display: block;
    height: 2px;
    margin: 0 1px 7px;
    background: repeating-linear-gradient(90deg, #333 0 2px, transparent 2px 4px);
  }
`;
const ToolButton = styled.button`
  display: flex;
  align-items: center;
  width: 100%;
  height: 23px;
  gap: 7px;
`;
const ToolRule = styled.hr`
  height: 1px;
  margin: 2px 0 5px;
  border: 0;
  background: #77787c;
`;
const Overflow = styled.button`
  display: block;
  margin: 6px auto 0 10px;
`;

const FEATURES = ['boss+', 'cut+', '-', 'fillet+', 'rib', 'shell', 'draftCut', 'hole', 'revolve', 'dome', '-', 'pattern+', '-', 'refGeo+', 'curves+', '-', 'instant'];
const SKETCH = ['sketch+', 'smartDim+', '-', 'sLine+', 'sRect+', 'slot+', 'sCircle+', 'arc+', 'spline+', 'ellipse+', 'sFillet+', 'polygon', 'point', 'plane', 'letter', '-', 'trim+', 'convert+', 'offset', 'mirror', 'grid+', 'move+', 'relations+'];

const Tools = ({ items }) => items.map((item, i) => {
  if (item === '-') return <ToolRule key={i} />;
  const name = item.replace('+', '');
  return (
    <ToolButton key={i} aria-label={name}>
      <Icon name={name} />
      {item.endsWith('+') && <Caret />}
    </ToolButton>
  );
});

/* ---------- property panel ---------- */

const Main = styled.main`
  flex: 1;
  min-width: 0;
  display: flex;
  flex-direction: column;
`;
const Split = styled.div`
  flex: 1;
  display: flex;
`;
const Panel = styled.section`
  position: relative;
  display: flex;
  flex-direction: column;
  width: 190px;
  border-top: 2px solid #7f819d;
  border-right: 2px solid #2d2e32;
  background: ${c.panel};
`;
const PanelTabs = styled.div`
  display: flex;
  height: 27px;
  padding-top: 4px;
  background: ${c.chrome};
  border-bottom: 1px solid ${c.line};
`;
const PanelTab = styled.button`
  display: grid;
  place-items: center;
  width: 28px;
  height: ${p => (p.$on ? 23 : 22)}px;
  border: 1px solid ${c.line};
  border-width: ${p => (p.$on ? 0 : '1px 1px 0')};
  background: ${p => (p.$on ? c.panel : c.mid)};
`;
const PanelTitle = styled.div`
  display: flex;
  align-items: center;
  gap: 4px;
  height: 24px;
  margin: 4px 3px 0 2px;
  padding: 0 5px 0 2px;
  border: 1px solid ${c.line};
  background: ${c.mid};
`;
const TitleText = styled.h2`
  flex: 1;
  margin: 0;
  font-size: 13px;
  line-height: 16px;
  font-weight: 600;
`;
const HelpButton = styled.button`
  color: #f4f4f5;
  font: 700 16px/18px "Open Sans", sans-serif;
  text-shadow: 1px 1px #77787b;
`;
const Confirm = styled.div`
  display: flex;
  align-items: center;
  gap: 9px;
  height: 33px;
  padding: 0 0 4px 3px;
  border-bottom: 1px solid ${c.line};
`;
const Group = styled.fieldset`
  display: flex;
  flex-direction: column;
  flex: ${p => (p.$grow ? 1 : 'none')};
  min-width: 0;
  width: 164px;
  margin: ${p => (p.$grow ? 11 : 2)}px 0 0 3px;
  padding: 0;
  border: 1px solid ${c.line};
  border-bottom-width: ${p => (p.$grow ? 0 : 1)}px;
  background: ${c.chrome};
`;
const GroupHead = styled.button`
  display: flex;
  align-items: center;
  justify-content: space-between;
  height: 19px;
  padding: 0 3px;
  border-bottom: 1px solid ${c.line};
  background: ${c.mid};
  font-size: 13px;
  line-height: 16px;
  font-weight: 600;
  small { font-size: 11px; font-weight: 400; }
`;
const GroupBody = styled.div`
  display: grid;
  grid-template-columns: 24px 116px;
  column-gap: 9px;
  padding: 3px 0 4px 3px;
`;
const SetIcon = styled.span`
  padding: 2px 3px;
`;
const Selection = styled.textarea`
  width: 116px;
  height: 47px;
  resize: none;
  border: 2px solid #58b0e6;
  box-shadow: inset 0 0 0 1px #a9d3f3;
  background: #cfe4f8;
`;
const ButtonPair = styled.div`
  grid-column: 2;
  display: flex;
  justify-content: space-between;
  padding: 8px 1px 3px;
`;
const PushButton = styled.button`
  width: 51px;
  height: 21px;
  border: 1px solid #707277;
  border-radius: 3px;
  background: linear-gradient(#f4f4f5, #ebebec 50%, #dcdcdf 50%, #d2d2d5);
  small { font-size: 11px; }
  &:disabled { border-color: #adb2b5; background: #f2f2f3; color: #8b8c8f; }
`;
const MateRow = styled.div`
  grid-column: 1 / -1;
  display: flex;
  align-items: center;
  gap: ${p => (p.$field ? 9 : 4)}px;
  height: 26px;
  margin-bottom: ${p => (p.$gap ? 6 : 0)}px;
  small { font-size: 11px; }
`;
const MateButton = styled.button`
  display: grid;
  place-items: center;
  width: 24px;
  height: 24px;
  border: 1px solid #85868a;
  box-shadow: inset 1px 1px #f8f8f9;
  background: ${c.chrome};
`;
const Spin = styled.div`
  display: flex;
  align-items: center;
  gap: 1px;
`;
const NumberBox = styled.input`
  width: 98px;
  height: 23px;
  padding: 0 3px 3px;
  border: 1px solid #aaaeb3;
  background: ${c.chrome};
  color: ${c.muted};
`;
const Spinner = styled.div`
  display: grid;
  gap: 1px;
  width: 17px;
  button {
    display: grid;
    place-items: center;
    height: 11px;
    background: #ececee;
  }
`;
const CheckRow = styled.div`
  grid-column: 2;
  display: flex;
  align-items: center;
  gap: 3px;
  height: 27px;
  color: ${c.muted};
  small { font-size: 11px; }
  input {
    appearance: none;
    width: 13px;
    height: 13px;
    margin: 0;
    border: 1px solid #b3b4b8;
    background: #f4f4f5;
  }
`;
const AlignLabel = styled.div`
  grid-column: 2;
  height: 33px;
  padding-top: 7px;
`;
const AlignRow = styled.div`
  grid-column: 2;
  display: flex;
  gap: 20px;
  padding: 0 0 0 17px;
`;
const MateList = styled.textarea`
  flex: 1;
  width: 149px;
  min-height: 20px;
  margin: 3px 0 0 3px;
  resize: none;
  border: 1px solid #818389;
  border-bottom: 0;
  background: #fff;
`;
const Handle = styled.button`
  position: absolute;
  z-index: 2;
  right: -9px;
  top: 231px;
  display: grid;
  align-content: center;
  justify-items: center;
  gap: 3px;
  width: 9px;
  height: 39px;
  border: 1px solid ${c.line};
  border-left: 0;
  background: ${c.panel};
  span {
    border: 3px solid transparent;
    border-right-color: #222;
    border-left: 0;
  }
`;

/* ---------- viewport ---------- */

const Viewport = styled.section`
  position: relative;
  flex: 1;
  min-width: 0;
  overflow: hidden;
  background: #fff;
`;
const Scene = styled.svg`
  position: absolute;
  inset: 0;
  width: 100%;
  height: 100%;
`;
const ViewTools = styled.div`
  position: relative;
  display: flex;
  align-items: center;
  gap: 7px;
  padding: 9px 0 0 47px;
`;
const ViewButton = styled.button`
  display: flex;
  align-items: center;
  gap: 8px;
  width: ${p => (p.$drop ? 30 : 16)}px;
  ${Caret} { width: 5px; height: 3px; }
`;
const TreeRow = styled.div`
  position: relative;
  display: flex;
  align-items: center;
  height: 20px;
  margin-top: 5px;
  padding-left: 2px;
  color: #000;
  white-space: pre;
`;
const Expander = styled.button`
  width: 9px;
  height: 9px;
  border: 1px solid #555;
  background: linear-gradient(#000, #000) center / 5px 1px no-repeat, linear-gradient(#000, #000) center / 1px 5px no-repeat, #fff;
`;
const Twig = styled.span`
  width: 5px;
  height: 1px;
  background: #777;
`;
const TreeText = styled.span`
  margin-left: 4px;
`;
const Corner = styled.div`
  position: absolute;
  top: 34px;
  right: 41px;
  display: flex;
  align-items: flex-start;
  gap: 6px;
  button:last-child { padding-top: 31px; }
`;
const TaskPane = styled.nav`
  position: absolute;
  top: 36px;
  right: 0;
  border: 1px solid ${c.line};
  border-width: 1px 0 1px 1px;
`;
const TaskTab = styled.button`
  display: grid;
  place-items: center;
  width: 23px;
  height: 24px;
  border-bottom: 2px solid ${c.line};
  background: ${p => (p.$on ? c.panel : c.mid)};
  box-shadow: inset 1px 1px #cbccd0;
  &:last-child { border-bottom-width: 1px; }
`;
const VIEW = [['zoomFit'], ['zoomArea'], ['prevView'], ['sectionView'], ['viewOrient', 1], ['display', 1], ['glasses', 1], ['sphere'], ['scene', 1], ['viewSettings', 1]];
const TASKS = ['chat', 'home', 'library', 'folder', 'palette', 'ball', 'custom', 'folderOut'];

const Model = () => (
  <Scene aria-label="零件模型">
    <defs>
      <linearGradient id="body" x2="0" y2="1">
        <stop offset="0" stopColor="#fb80fb" />
        <stop offset=".18" stopColor="#ff90ff" />
        <stop offset=".38" stopColor="#ff98ff" />
        <stop offset=".5" stopColor="#fb82fb" />
        <stop offset=".65" stopColor="#b45cb4" />
        <stop offset=".85" stopColor="#6e386e" />
        <stop offset="1" stopColor="#451d45" />
      </linearGradient>
      <linearGradient id="bore" x2="0" y2="1">
        <stop offset="0" stopColor="#54254f" />
        <stop offset=".25" stopColor="#9a4d9a" />
        <stop offset=".5" stopColor="#ee7aee" />
        <stop offset=".7" stopColor="#ff98ff" />
        <stop offset="1" stopColor="#ff88ff" />
      </linearGradient>
      <linearGradient id="pin" x2="1" y2="0">
        <stop offset="0" stopColor="#5a2b58" />
        <stop offset="1" stopColor="#df74df" />
      </linearGradient>
    </defs>
    <g transform="translate(-291 -136)" stroke="#060306" strokeWidth="1.200">
      <path d="M350 315L477 314A25 52 0 0 1 477 418L350 418Z" fill="url(#body)" />
      <path d="M357 315A27 51.500 0 0 1 357 418" fill="none" strokeWidth="1.400" strokeDasharray="9 1" />
      <path d="M359 315A27 51.500 0 0 1 359 418" fill="none" strokeDasharray="4 1" />
      <ellipse cx="351" cy="366.500" rx="26" ry="51.500" fill="#b85db8" />
      <ellipse cx="350" cy="366.500" rx="26" ry="51.500" fill="#b85db8" />
      <ellipse cx="350" cy="366.500" rx="15" ry="29.500" fill="#9a509a" />
      <ellipse cx="351" cy="366.500" rx="13.500" ry="28.500" fill="url(#bore)" />
      <ellipse cx="470.800" cy="342" rx="8.500" ry="7" transform="rotate(35 471 342)" fill="url(#pin)" />
      <path d="M463 340c5 0 9 4 10 9-5-1-9-4-10-9z" fill="#2a122a" />
      <path d="M501 456L627 455A25.500 52 0 0 1 627 559L501 559Z" fill="url(#body)" />
      <ellipse cx="502" cy="507.500" rx="26" ry="51.500" fill="#b85db8" />
      <ellipse cx="501" cy="507.500" rx="26" ry="51.500" fill="#b85db8" />
    </g>
    <g transform="translate(-291 -136)">
      <path d="M331 605h20" stroke="#a51c1c" strokeWidth="4" />
      <path d="M348 600l9 5-9 5z" fill="#82201d" />
      <path d="M331 605l9-9" stroke="#1c5c20" strokeWidth="4" />
      <path d="M336 593l9-3-1 6-5 3z" fill="#237a29" />
      <path d="M331 605l4 17" stroke="#1c1cc0" strokeWidth="4" />
      <path d="M331 623l9-2-1 11z" fill="#4b4be4" />
      <g fontFamily="Liberation Mono" fontSize="10">
        <text x="355" y="608" fill="#f00">X</text>
        <text x="341" y="591" fill="#0a8a0a">Y</text>
        <text x="334" y="640" fill="#00f">Z</text>
      </g>
    </g>
    <svg x="100%" overflow="visible">
      <path d="M-.5 286v106M-.5 456v80" stroke="#b25ab2" />
    </svg>
  </Scene>
);

/* ---------- bottom bars ---------- */

const SheetBar = styled.div`
  display: flex;
  height: 15px;
  border-top: 1px solid ${c.line};
  border-bottom: 1px solid ${c.line};
  background: ${c.panel};
`;
const SheetNav = styled.button`
  display: grid;
  place-items: center;
  width: 17px;
  background: ${c.mid};
  box-shadow: inset 1px 1px #c5c6ca, inset -1px 0 #8a8b8f;
`;
const SheetTab = styled.button`
  width: ${p => p.$w}px;
  border: 1px solid ${c.line};
  border-width: 0 1px;
  background: ${p => (p.$on ? c.panel : c.mid)};
  line-height: 12px;
  white-space: nowrap;
`;
const StatusBar = styled.footer`
  display: flex;
  align-items: center;
  height: 20px;
  padding: 0 24px 0 1px;
  border-top: 1px solid ${c.line};
  color: #000;
`;
const StatusText = styled.span`
  font-size: 13px;
  line-height: 16px;
`;
const StatusRight = styled.div`
  display: flex;
  align-items: center;
  margin-left: auto;
`;
const UnitButton = styled.button`
  display: flex;
  align-items: center;
  gap: 18px;
  color: #9a9b9f;
  ${Caret} { width: 6px; height: 3px; }
`;
const StatusHelp = styled.button`
  width: 14px;
  height: 14px;
  margin: 0 50px 0 16px;
  border: 1px solid #1d3f66;
  background: #effaf4;
  color: #109b24;
  font: 800 12px/12px "Open Sans", sans-serif;
`;

const MATES = [['coincident', '重合', 'C', 1], ['parallel', '平行', 'P'], ['perpendicular', '垂直', 'P'], ['tangent', '相切', 'T'], ['concentric', '同心', 'C']];

const Dimension = ({ id, icon, value, label }) => (
  <MateRow $field>
    <MateButton aria-label={label}><Icon name={icon} size={20} /></MateButton>
    <Spin>
      <NumberBox id={id} aria-label={label} defaultValue={value} disabled />
      <Spinner>
        <button aria-label={`${label} +`}><Caret $up $color="#8a8b8f" /></button>
        <button aria-label={`${label} -`}><Caret $color="#8a8b8f" /></button>
      </Spinner>
    </Spin>
  </MateRow>
);

export default function App() {
  return (
    <Window>
      <GlobalStyle />
      <Frame>
        <TitleBar>
          <Brand>
            <BrandMark viewBox="0 0 22 22" aria-hidden="true">
              <path d="M7 2c5-2 9 0 6 3-1 1-3 2-5 3M8 8c5 0 3 8-6 11 2-4 4-7 7-9M21 8c-6-1-8 1-6 4 2 4 0 7-5 7" fill="none" stroke="#fff" strokeWidth="1.800" />
            </BrandMark>
            <span><b>SOLID</b>WORKS</span>
          </Brand>
          <BrandToggle aria-label="菜单" />
          <QuickTools>
            {QUICK.map(([name, label, w, drop]) => (
              <QuickButton key={name} aria-label={label} $w={w}>
                <Icon name={name} />
                {drop && <Caret $color={drop === 2 ? '#222' : '#a7a9ac'} />}
              </QuickButton>
            ))}
          </QuickTools>
          <DocTitle>零件1 *</DocTitle>
          <WindowButtons>
            <HelpMenu aria-label="帮助"><Icon name="help" /><Caret $color="#333" /></HelpMenu>
            <PlainButton aria-label="最小化"><Icon name="winMin" /></PlainButton>
            <PlainButton aria-label="最大化"><Icon name="winMax" /></PlainButton>
            <PlainButton aria-label="关闭"><Icon name="winClose" /></PlainButton>
          </WindowButtons>
        </TitleBar>

        <Ribbon>
          <BigButton $w={49} $tall><Icon name="study" /><span>设计算例</span><Caret $color="#97999d" /></BigButton>
          <Rule />
          {BIG.map(([name, label, w]) => (
            <BigButton key={name} $w={w}><Icon name={name} /><span>{label}</span></BigButton>
          ))}
          {COMMANDS.map(([w, pad, rows], i) => (
            <React.Fragment key={w}>
              {i === 1 && <Rule />}
              <Commands $w={w} $pad={pad}>
                {rows.map(([name, label]) => (
                  <Command key={label} $active={name === 'curvature'}><Icon name={name} size={16} />{label}</Command>
                ))}
              </Commands>
            </React.Fragment>
          ))}
          <MoreButton aria-label="更多"><Icon name="more" size={14} /></MoreButton>
        </Ribbon>

        <TabRow>
          <RibbonTab $w={57}>特征</RibbonTab>
          <RibbonTab $w={56}>草图</RibbonTab>
          <RibbonTab $w={54} $on>评估</RibbonTab>
          <RibbonTab $w={68}>DimXpert</RibbonTab>
          <RibbonTab $w={74}>办公室产品</RibbonTab>
          <DocButtons>
            {['paneL', 'paneR', 'winMin', 'winRestore', 'winClose'].map(n => (
              <PlainButton key={n} aria-label={n}><Icon name={n} size={17} /></PlainButton>
            ))}
          </DocButtons>
        </TabRow>

        <Work>
          <Rail $w={47} $edge><Strip $end><Tools items={FEATURES} /></Strip></Rail>
          <Rail $w={46}>
            <Strip>
              <Tools items={SKETCH} />
              <Overflow aria-label="更多工具"><Icon name="down" size={14} /></Overflow>
            </Strip>
          </Rail>
          <Main>
            <Split>
              <Panel>
                <PanelTabs>
                  {['part', 'propTab', 'config', 'target', 'ballDark'].map(n => (
                    <PanelTab key={n} $on={n === 'propTab'} aria-label={n}><Icon name={n} size={17} /></PanelTab>
                  ))}
                </PanelTabs>
                <PanelTitle>
                  <Icon name="find" />
                  <TitleText>找出零件</TitleText>
                  <HelpButton>?</HelpButton>
                </PanelTitle>
                <Confirm>
                  <PlainButton aria-label="确定"><Icon name="ok" size={17} /></PlainButton>
                  <PlainButton aria-label="取消"><Icon name="cancel" size={16} /></PlainButton>
                </Confirm>
                <Group>
                  <GroupHead><span>配合设定<small>(S)</small></span><Icon name="up" size={14} /></GroupHead>
                  <GroupBody>
                    <SetIcon><Icon name="selSet" size={20} /></SetIcon>
                    <Selection aria-label="配合实体" />
                    <ButtonPair>
                      <PushButton>添加<small>(A)</small></PushButton>
                      <PushButton disabled>撤消<small>(U)</small></PushButton>
                    </ButtonPair>
                    {MATES.map(([name, label, key, gap]) => (
                      <MateRow key={name} $gap={gap}>
                        <MateButton id={name}><Icon name={name} size={20} /></MateButton>
                        <label htmlFor={name}>{label}<small>({key})</small></label>
                      </MateRow>
                    ))}
                    <Dimension id="distance" icon="distance" value="10.00mm" label="距离" />
                    <CheckRow>
                      <input id="flip" type="checkbox" disabled />
                      <label htmlFor="flip">反转尺寸<small>(F)</small></label>
                    </CheckRow>
                    <Dimension id="angle" icon="angle" value="30.00度" label="角度" />
                    <AlignLabel>配合对齐</AlignLabel>
                    <AlignRow>
                      <PlainButton aria-label="同向对齐"><Icon name="aligned" size={20} /></PlainButton>
                      <PlainButton aria-label="反向对齐"><Icon name="antiAligned" size={20} /></PlainButton>
                    </AlignRow>
                  </GroupBody>
                </Group>
                <Group $grow>
                  <GroupHead><span>配合</span><Icon name="up" size={14} /></GroupHead>
                  <MateList aria-label="配合" rows={1} />
                </Group>
                <Handle aria-label="折叠面板"><span /><span /><span /></Handle>
              </Panel>
              <Viewport>
                <Model />
                <ViewTools>
                  {VIEW.map(([name, drop]) => (
                    <ViewButton key={name} $drop={drop} aria-label={name}>
                      <Icon name={name} size={16} />{drop && <Caret />}
                    </ViewButton>
                  ))}
                </ViewTools>
                <TreeRow>
                  <Expander aria-label="展开" /><Twig /><Icon name="part" size={17} />
                  <TreeText>{'零件1  (默认<按加工><<...'}</TreeText>
                </TreeRow>
                <Corner>
                  <button aria-label="接受"><Icon name="okLight" size={27} /></button>
                  <button aria-label="放弃"><Icon name="cancelLight" size={26} /></button>
                </Corner>
                <TaskPane>
                  {TASKS.map(n => <TaskTab key={n} $on={n === 'ball'} aria-label={n}><Icon name={n} size={17} /></TaskTab>)}
                </TaskPane>
              </Viewport>
            </Split>
            <SheetBar>
              {['first', 'prev', 'next', 'last'].map(n => <SheetNav key={n} aria-label={n}><Icon name={n} size={14} /></SheetNav>)}
              <SheetTab $w={46} $on>模型</SheetTab>
              <SheetTab $w={76}>运动算例 1</SheetTab>
            </SheetBar>
          </Main>
        </Work>

        <StatusBar>
          <StatusText>SolidWorks Premium 2014 x64 版</StatusText>
          <StatusRight>
            <UnitButton>自定义<Caret $up $color="#8a8b8f" /></UnitButton>
            <StatusHelp aria-label="快速提示">?</StatusHelp>
            <PlainButton aria-label="标签"><Icon name="tag" size={16} /></PlainButton>
          </StatusRight>
        </StatusBar>
      </Frame>
    </Window>
  );
}
